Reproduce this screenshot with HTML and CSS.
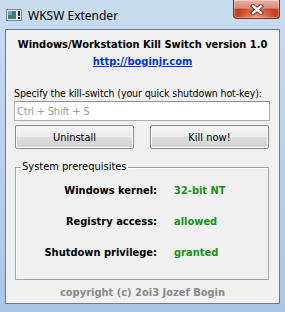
FILE: index.html
```html
<!DOCTYPE html>
<html lang="en">
<head>
    <meta charset="UTF-8">
    <title>WKSW Extender</title>
    <link rel="stylesheet" href="styles.css">
</head>
<body>
    <div class="window">
        <div class="titlebar">
            <svg class="app-icon" width="16" height="12" viewBox="0 0 16 12">
                <rect x="0.5" y="0.5" width="15" height="11" fill="#e8ecef" stroke="#7d8790"/>
                <rect x="2" y="2" width="8" height="8" fill="#3d7f78"/>
                <rect x="2" y="2" width="4" height="4" fill="#6aa8a0"/>
                <rect x="12" y="2" width="2" height="5" fill="#2a2a2a"/>
                <rect x="12" y="8" width="2" height="2" fill="#2a2a2a"/>
            </svg>
            <span class="title">WKSW Extender</span>
            <div class="close-btn">
                <svg width="14" height="11" viewBox="0 0 14 11">
                    <path d="M3 2 L11 9 M11 2 L3 9" stroke="#5a2a22" stroke-width="4.2" stroke-linecap="square"/>
                    <path d="M3 2 L11 9 M11 2 L3 9" stroke="#ffffff" stroke-width="2.4" stroke-linecap="square"/>
                </svg>
            </div>
        </div>

        <div class="client">
            <div class="heading">Windows/Workstation Kill Switch version 1.0</div>
            <div class="link-row"><a href="#">http://boginjr.com</a></div>

            <div class="label">Specify the kill-switch (your quick shutdown hot-key):</div>
            <input type="text" class="hotkey" placeholder="Ctrl + Shift + S">

            <div class="buttons">
                <button>Uninstall</button>
                <button>Kill now!</button>
            </div>

            <fieldset class="prereq">
                <legend>System prerequisites</legend>
                <div class="rows">
                    <span class="key">Windows kernel:</span><span class="val">32-bit NT</span>
                    <span class="key">Registry access:</span><span class="val">allowed</span>
                    <span class="key">Shutdown privilege:</span><span class="val">granted</span>
                </div>
            </fieldset>

            <div class="copyright">copyright (c) 2oi3 Jozef Bogin</div>
        </div>
    </div>
</body>
</html>
```

FILE: styles.css
```css
body {
    margin: 0;
    font-family: "DejaVu Sans Condensed", "Liberation Sans", sans-serif;
    font-size: 11px;
    color: #000;
}
.window {
    width: 285px;
    height: 312px;
    box-sizing: border-box;
    padding: 0 5px 8px 5px;
    display: flex;
    flex-direction: column;
    background: linear-gradient(180deg, #c8dcf1 0%, #bcd3ec 40%, #aac6e6 100%);
}
.titlebar {
    height: 29px;
    flex-shrink: 0;
    display: flex;
    align-items: center;
    position: relative;
}
.app-icon {
    margin-left: 1px;
    margin-top: 1px;
}
.title {
    margin-left: 6px;
    margin-top: 1px;
    font-family: "Noto Sans", "Open Sans", sans-serif;
    font-size: 12px;
    color: #000;
}
.close-btn {
    position: absolute;
    top: 0;
    right: 0;
    width: 47px;
    height: 19px;
    box-sizing: border-box;
    border: 1px solid #6e2c22;
    border-top: none;
    border-radius: 0 0 4px 4px;
    background:
        radial-gradient(ellipse at 50% 100%, rgba(255, 170, 120, 0.8) 0%, rgba(255, 140, 100, 0) 60%),
        linear-gradient(180deg, #eab0a4 0%, #dc8a78 45%, #c33d24 52%, #c8472d 100%);
    box-shadow: inset 0 0 0 1px rgba(255, 255, 255, 0.35);
    display: flex;
    align-items: center;
    justify-content: center;
}
.client {
    flex: 1;
    min-height: 0;
    background-color: #f0f0f0;
    border: 1px solid #6b7c8f;
    padding: 8px 8px 0 8px;
    display: flex;
    flex-direction: column;
}
.heading {
    font-weight: bold;
    text-align: center;
    line-height: 14px;
}
.link-row {
    text-align: center;
    line-height: 14px;
    margin-top: 3px;
}
.link-row a {
    color: #0033cc;
    font-weight: bold;
    text-decoration: underline;
}
.label {
    margin-top: 17px;
    line-height: 14px;
    font-size: 10.5px;
    letter-spacing: -0.1px;
    white-space: nowrap;
}
.hotkey {
    margin: 1px 1px 0 0;
    height: 20px;
    flex-shrink: 0;
    box-sizing: border-box;
    border: 1px solid #abadb3;
    border-top-color: #8e8f8f;
    padding: 0 2px;
    font-family: inherit;
    font-size: 11px;
    letter-spacing: -0.2px;
    background: #fff;
}
.hotkey::placeholder {
    color: #9a9a9a;
}
.buttons {
    display: flex;
    gap: 16px;
    margin: 4px 2px 0 1px;
}
.buttons button {
    flex: 1;
    height: 24px;
    font-family: inherit;
    font-size: 11px;
    color: #000;
    border: 1px solid #8a8a8a;
    border-radius: 2px;
    background: linear-gradient(180deg, #f4f4f4 0%, #ebebeb 50%, #dddddd 51%, #d2d2d2 100%);
    box-shadow: inset 0 0 0 1px #fcfcfc;
}
.prereq {
    margin: 11px 2px 0 1px;
    padding: 10px 0 0 0;
    height: 120px;
    flex-shrink: 0;
    box-sizing: border-box;
    border: 1px solid #a3a3a3;
    box-shadow: inset 1px 1px 0 #fff;
}
.prereq legend {
    margin-left: 5px;
    padding: 0 1px;
    line-height: 14px;
}
.rows {
    display: grid;
    grid-template-columns: 141px auto;
    column-gap: 17px;
    row-gap: 17px;
    font-weight: bold;
    line-height: 14px;
}
.key {
    text-align: right;
}
.val {
    color: #1a8f1a;
}
.copyright {
    text-align: center;
    color: #8a8a8a;
    font-weight: bold;
    margin-top: 6px;
    line-height: 14px;
}
```
